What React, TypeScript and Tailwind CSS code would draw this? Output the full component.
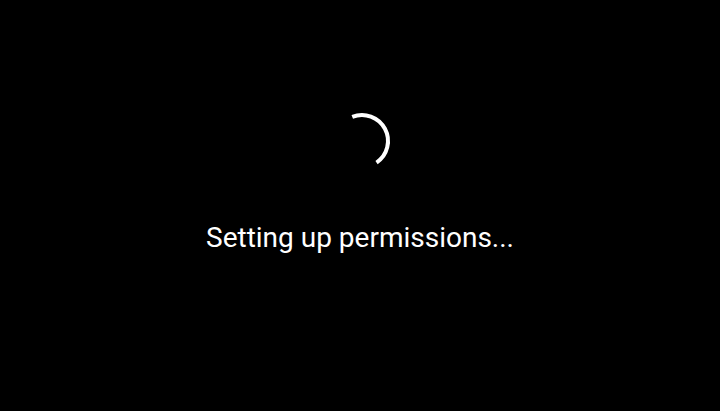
export default function App() {
  return (
    <div className="w-[720px] h-[411px] bg-black flex flex-col items-center pt-[111px]" style={{ fontFamily: "Roboto, 'Noto Sans', sans-serif" }}>
      <svg width="60" height="60" viewBox="0 0 60 60" className="block ml-[4px]">
        <path
          d="M 20.26 5.9 A 26 26 0 0 1 44.54 51.56"
          fill="none"
          stroke="#ffffff"
          strokeWidth="4"
          strokeLinecap="butt"
        />
      </svg>
      <div className="mt-[50px] text-white text-[28px] leading-[34px]">Setting up permissions...</div>
    </div>
  );
}
